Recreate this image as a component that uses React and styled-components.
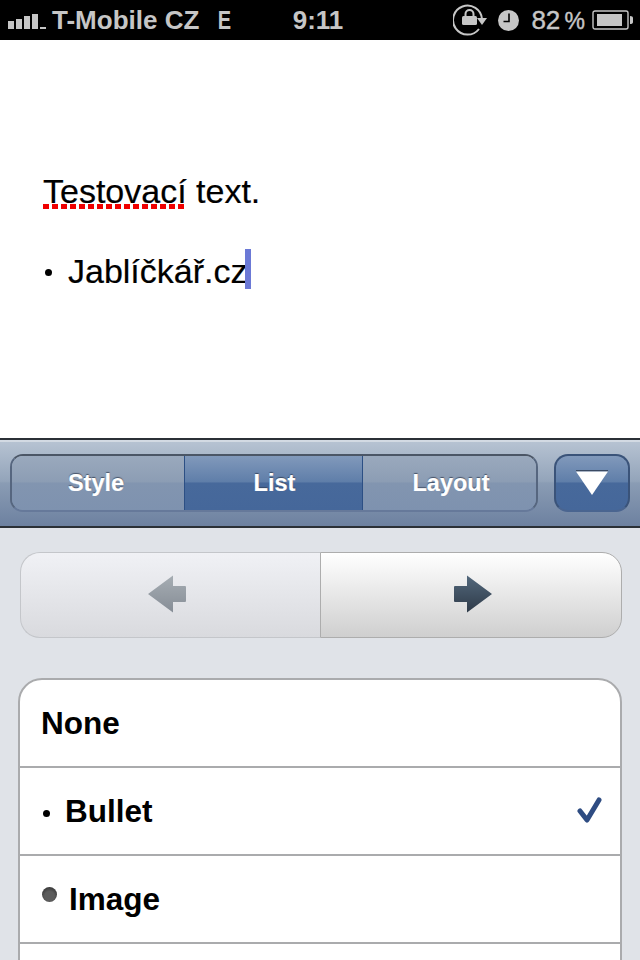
import React from 'react';
import styled, { createGlobalStyle } from 'styled-components';

const GlobalStyle = createGlobalStyle`
  html, body {
    margin: 0;
    padding: 0;
    background: #fff;
    overflow: hidden;
  }
  * {
    box-sizing: border-box;
  }
`;

const Page = styled.div`
  width: 640px;
  height: 960px;
  overflow: hidden;
  display: flex;
  flex-direction: column;
  font-family: "Liberation Sans", Arial, sans-serif;
`;

const StatusBar = styled.div`
  height: 40px;
  flex: none;
  background: #000;
  color: #c6c6c6;
  display: grid;
  grid-template-columns: 1fr auto 1fr;
  align-items: center;
  font-size: 26px;
  font-weight: bold;
  line-height: 36px;
`;

const StatusLeft = styled.div`
  display: flex;
  align-items: center;
  padding-left: 8px;
`;

const StatusRight = styled.div`
  display: flex;
  align-items: center;
  justify-content: flex-end;
  padding-right: 6px;
`;

const Carrier = styled.span`
  margin-left: 6px;
`;

const Network = styled.span`
  display: inline-block;
  margin-left: 17px;
  font-size: 25px;
  transform: scaleX(0.8);
`;

const Clock = styled.span`
  margin-left: -2px;
  padding-right: 2px;
`;

const ClockSvg = styled.svg`
  margin-left: 9px;
`;

const Percent = styled.span`
  margin: 0 7px 0 12px;
  font-weight: normal;
  word-spacing: -3px;
  -webkit-text-stroke: 0.4px #c6c6c6;
`;

const PercentSign = styled.span`
  font-size: 23px;
`;

const Doc = styled.div`
  height: 398px;
  flex: none;
  background: #fff;
  padding: 132px 0 0 43px;
  color: #000;
  font-size: 34px;
  line-height: 38px;
  -webkit-text-stroke: 0.2px #000;
`;

const DocLine = styled.div`
  white-space: nowrap;
`;

const Squiggle = styled.span`
  background-image: repeating-linear-gradient(to right, #f00000 0 6px, transparent 6px 9px);
  background-size: 100% 5px;
  background-position: left 0 bottom 1px;
  background-repeat: no-repeat;
`;

const DocList = styled.div`
  margin-top: 42px;
  display: flex;
  align-items: center;
  height: 38px;
  white-space: nowrap;
`;

const DocDot = styled.span`
  width: 7px;
  height: 7px;
  border-radius: 50%;
  background: #000;
  margin: 2px 16px 0 2px;
  flex: none;
`;

const Caret = styled.span`
  display: inline-block;
  width: 6px;
  height: 40px;
  margin-left: -3px;
  background: #6b79d6;
  align-self: flex-start;
  margin-top: -3px;
`;

const Toolbar = styled.div`
  height: 90px;
  flex: none;
  border-top: 2px solid #2b3036;
  border-bottom: 2px solid #2b3036;
  box-shadow: inset 0 2px 0 #d3dae3;
  background: linear-gradient(#b8c4d3, #93a4ba 48%, #8a9cb4 50%, #6d81a0);
  padding: 14px 10px 0;
  display: flex;
  gap: 16px;
  align-items: flex-start;
`;

const Segments = styled.div`
  flex: 1;
  height: 58px;
  display: grid;
  grid-template-columns: 173px 178px 1fr;
  border: 2px solid #56667f;
  border-top-color: #4b5666;
  border-bottom-color: #66799a;
  border-radius: 13px;
  overflow: hidden;
`;

const Segment = styled.div`
  display: flex;
  align-items: center;
  justify-content: center;
  color: #fff;
  font-size: 23.5px;
  font-weight: bold;
  text-shadow: 0 -1px 1px rgba(40, 50, 70, 0.7);
  -webkit-text-stroke: 0.2px #fff;
  padding: 1px ${({ $padRight }) => $padRight || 0}px 0 ${({ $padLeft }) => $padLeft || 0}px;
  border-right: 1px solid ${({ $last }) => ($last ? 'transparent' : '#2c4f84')};
  background: ${({ $active }) =>
    $active
      ? 'linear-gradient(#8199bb, #5f7ea9 48%, #47699b 50%, #45679a)'
      : 'linear-gradient(#9aa9bd, #8c9db4 48%, #8295b0 50%, #7e92af)'};
`;

const DownButton = styled.div`
  width: 76px;
  height: 58px;
  flex: none;
  border: 2px solid #3a5379;
  border-bottom-color: #4a6590;
  border-radius: 14px;
  background: linear-gradient(#8199bb, #5f7ea9 48%, #47699b 50%, #45679a);
  display: flex;
  align-items: center;
  justify-content: center;
`;

const Panel = styled.div`
  flex: 1;
  background: #e0e3e8;
  padding: 24px 18px 0;
  min-height: 0;
`;

const Stepper = styled.div`
  margin-left: 2px;
  height: 86px;
  display: grid;
  grid-template-columns: 300px 1fr;
`;

const StepButton = styled.div`
  display: flex;
  align-items: center;
  justify-content: center;
  padding-bottom: 2px;
  ${({ $disabled }) =>
    $disabled
      ? `
    padding-right: 8px;
    border: 1px solid #c4c6ca;
    border-right: 0;
    border-radius: 20px 0 0 20px;
    background: linear-gradient(#f0f1f5, #d9dade);
  `
      : `
    padding-left: 4px;
    border: 1px solid #adadad;
    border-radius: 0 20px 20px 0;
    background: linear-gradient(#ffffff, #cfcfcf);
  `}
`;

const OptionList = styled.div`
  margin-top: 40px;
  background: #fff;
  border: 2px solid #aaabad;
  border-radius: 24px;
  overflow: hidden;
`;

const Option = styled.div`
  height: 88px;
  display: flex;
  align-items: center;
  padding: 0 17px 0 21px;
  border-bottom: 2px solid #aaabad;
  color: #000;
  font-size: 31.5px;
  font-weight: bold;
`;

const SmallDot = styled.span`
  width: 7px;
  height: 7px;
  margin: 4px 15px 0 2px;
  border-radius: 50%;
  background: #000;
  flex: none;
`;

const ImageDot = styled.span`
  width: 15px;
  height: 15px;
  margin: -10px 12px 0 1px;
  border-radius: 50%;
  background: radial-gradient(circle at 50% 62%, #5c5c5c 40%, #3a3a3a 75%, #777 100%);
  flex: none;
`;

const Check = styled.svg`
  margin-left: auto;
`;

function SignalIcon() {
  return (
    <svg width="38" height="18" viewBox="0 0 38 18">
      <rect x="0" y="10" width="6" height="8" fill="#c6c6c6" />
      <rect x="8" y="8" width="6" height="10" fill="#c6c6c6" />
      <rect x="16" y="5" width="6" height="13" fill="#c6c6c6" />
      <rect x="24" y="3" width="6" height="15" fill="#c6c6c6" />
      <rect x="32" y="16" width="6" height="2" fill="#c6c6c6" />
    </svg>
  );
}

function RotationLockIcon() {
  return (
    <svg width="36" height="32" viewBox="0 0 36 32" fill="none">
      <path d="M26 25 A14.5 14.5 0 1 1 29 15" stroke="#c6c6c6" strokeWidth="2" />
      <path d="M24 14 H34 L29 21 Z" fill="#c6c6c6" />
      <rect x="9" y="12" width="15" height="9" rx="1.5" fill="#c6c6c6" />
      <path d="M12.5 12 V10 A4 4 0 0 1 20.5 10 V12" stroke="#c6c6c6" strokeWidth="2" />
    </svg>
  );
}

function ClockIcon() {
  return (
    <ClockSvg width="21" height="21" viewBox="0 0 21 21">
      <circle cx="10.5" cy="10.5" r="10.5" fill="#c6c6c6" />
      <path d="M11 3.5 V11.5 H5.5" stroke="#000" strokeWidth="1.6" fill="none" />
    </ClockSvg>
  );
}

function BatteryIcon() {
  return (
    <svg width="42" height="20" viewBox="0 0 42 20">
      <rect x="1" y="1" width="35" height="18" rx="2" fill="none" stroke="#c6c6c6" strokeWidth="1.4" />
      <rect x="5" y="4" width="25" height="12" fill="#c6c6c6" />
      <path d="M38 6 Q41 6 41 8 V12 Q41 14 38 14 Z" fill="#c6c6c6" />
    </svg>
  );
}

function DownTriangle() {
  return (
    <svg width="34" height="26" viewBox="0 0 34 26">
      <rect x="1" y="0" width="32" height="1.5" fill="#3a4a63" />
      <path d="M1 1.5 H33 L17 25 Z" fill="#fff" />
    </svg>
  );
}

function LeftArrow() {
  return (
    <svg width="38" height="38" viewBox="0 0 38 38">
      <defs>
        <linearGradient id="leftFill" x1="0" y1="0" x2="0" y2="1">
          <stop offset="0" stopColor="#a6adb3" />
          <stop offset="1" stopColor="#868d96" />
        </linearGradient>
      </defs>
      <path d="M0 19 L25 0.5 V11 H37 Q38 11 38 12 V26 Q38 27 37 27 H25 V37.5 Z" fill="url(#leftFill)" />
    </svg>
  );
}

function RightArrow() {
  return (
    <svg width="38" height="38" viewBox="0 0 38 38">
      <defs>
        <linearGradient id="rightFill" x1="0" y1="0" x2="0" y2="1">
          <stop offset="0" stopColor="#53687c" />
          <stop offset="1" stopColor="#2e3a48" />
        </linearGradient>
      </defs>
      <path d="M38 19 L13 0.5 V11 H1 Q0 11 0 12 V26 Q0 27 1 27 H13 V37.5 Z" fill="url(#rightFill)" />
    </svg>
  );
}

export default function App() {
  return (
    <>
      <GlobalStyle />
      <Page>
        <StatusBar>
          <StatusLeft>
            <SignalIcon />
            <Carrier>T-Mobile CZ</Carrier>
            <Network>E</Network>
          </StatusLeft>
          <Clock>9:11</Clock>
          <StatusRight>
            <RotationLockIcon />
            <ClockIcon />
            <Percent>82 <PercentSign>%</PercentSign></Percent>
            <BatteryIcon />
          </StatusRight>
        </StatusBar>

        <Doc>
          <DocLine>
            <Squiggle>Testovací</Squiggle> text.
          </DocLine>
          <DocList>
            <DocDot />
            Jablíčkář.cz
            <Caret />
          </DocList>
        </Doc>

        <Toolbar>
          <Segments>
            <Segment $padRight={4}>Style</Segment>
            <Segment $active $padLeft={2}>List</Segment>
            <Segment $last $padLeft={4}>Layout</Segment>
          </Segments>
          <DownButton>
            <DownTriangle />
          </DownButton>
        </Toolbar>

        <Panel>
          <Stepper>
            <StepButton $disabled>
              <LeftArrow />
            </StepButton>
            <StepButton>
              <RightArrow />
            </StepButton>
          </Stepper>
          <OptionList>
            <Option>None</Option>
            <Option>
              <SmallDot />
              Bullet
              <Check width="28" height="28" viewBox="0 0 28 28" fill="none">
                <path d="M5 14 L12 23 L24 3" stroke="#2e4c82" strokeWidth="5" strokeLinecap="round" strokeLinejoin="round" />
              </Check>
            </Option>
            <Option>
              <ImageDot />
              Image
            </Option>
            <Option />
          </OptionList>
        </Panel>
      </Page>
    </>
  );
}
